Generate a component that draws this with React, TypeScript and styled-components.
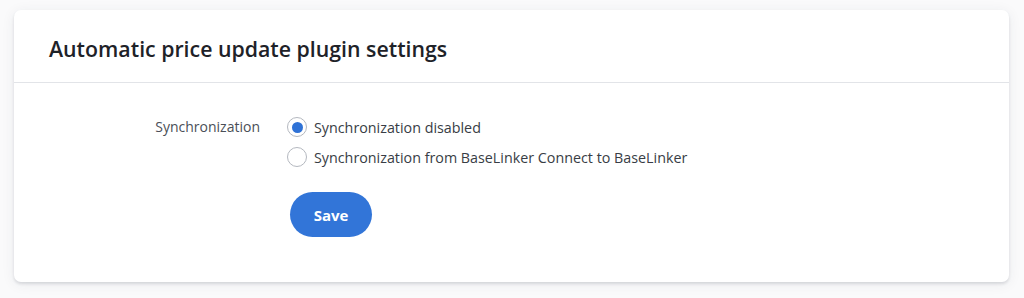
import React, { useState } from 'react';
import styled, { createGlobalStyle } from 'styled-components';

const GlobalStyle = createGlobalStyle`
  html, body {
    margin: 0;
    padding: 0;
    background: #fafafb;
    font-family: "Open Sans", "Liberation Sans", sans-serif;
  }
`;

const Page = styled.div`
  padding: 10px 15px 16px 14px;
`;

const Card = styled.section`
  background: #fff;
  border-radius: 7px;
  box-shadow: 0 2px 3px rgba(40, 50, 70, 0.14), 0 2px 14px rgba(40, 50, 70, 0.07);
`;

const Header = styled.header`
  height: 73px;
  box-sizing: border-box;
  display: flex;
  align-items: center;
  padding: 4px 35px 0;
  border-bottom: 1px solid #e2e4e8;
`;

const Title = styled.h2`
  margin: 0;
  font-size: 21.3px;
  font-weight: 600;
  color: #1e2228;
`;

const Body = styled.div`
  padding: 29px 0 45px;
`;

const FormRow = styled.div`
  display: grid;
  grid-template-columns: 246px 1fr;
  column-gap: 27px;
`;

const Label = styled.div`
  text-align: right;
  font-size: 14px;
  line-height: 30px;
  color: #4a4f57;
`;

const Options = styled.div`
  display: flex;
  flex-direction: column;
`;

const Option = styled.label`
  display: flex;
  align-items: center;
  gap: 7px;
  height: 30px;
  font-size: 14.3px;
  color: #383d45;
  cursor: pointer;
`;

const Radio = styled.span<{ $checked: boolean }>`
  width: 20px;
  height: 20px;
  box-sizing: border-box;
  border-radius: 50%;
  border: 1px solid #b4b8bf;
  background: #fff;
  display: flex;
  align-items: center;
  justify-content: center;
  &::after {
    content: '';
    width: 11px;
    height: 11px;
    border-radius: 50%;
    background: ${(p) => (p.$checked ? '#2f72d6' : 'transparent')};
  }
`;

const Actions = styled.div`
  grid-column: 2;
  padding-top: 20px;
`;

const SaveButton = styled.button`
  margin-left: 3px;
  width: 82px;
  height: 45px;
  border: none;
  border-radius: 23px;
  background: #3275d8;
  color: #fff;
  font-family: inherit;
  font-size: 15px;
  font-weight: 700;
  cursor: pointer;
`;

const options = [
  { id: 'disabled', text: 'Synchronization disabled' },
  { id: 'baselinker', text: 'Synchronization from BaseLinker Connect to BaseLinker' },
];

export default function App() {
  const [value, setValue] = useState('disabled');
  return (
    <>
      <GlobalStyle />
      <Page>
        <Card>
          <Header>
            <Title>Automatic price update plugin settings</Title>
          </Header>
          <Body>
            <FormRow>
              <Label>Synchronization</Label>
              <Options>
                {options.map((o) => (
                  <Option key={o.id} onClick={() => setValue(o.id)}>
                    <Radio $checked={value === o.id} />
                    {o.text}
                  </Option>
                ))}
              </Options>
              <Actions>
                <SaveButton>Save</SaveButton>
              </Actions>
            </FormRow>
          </Body>
        </Card>
      </Page>
    </>
  );
}
